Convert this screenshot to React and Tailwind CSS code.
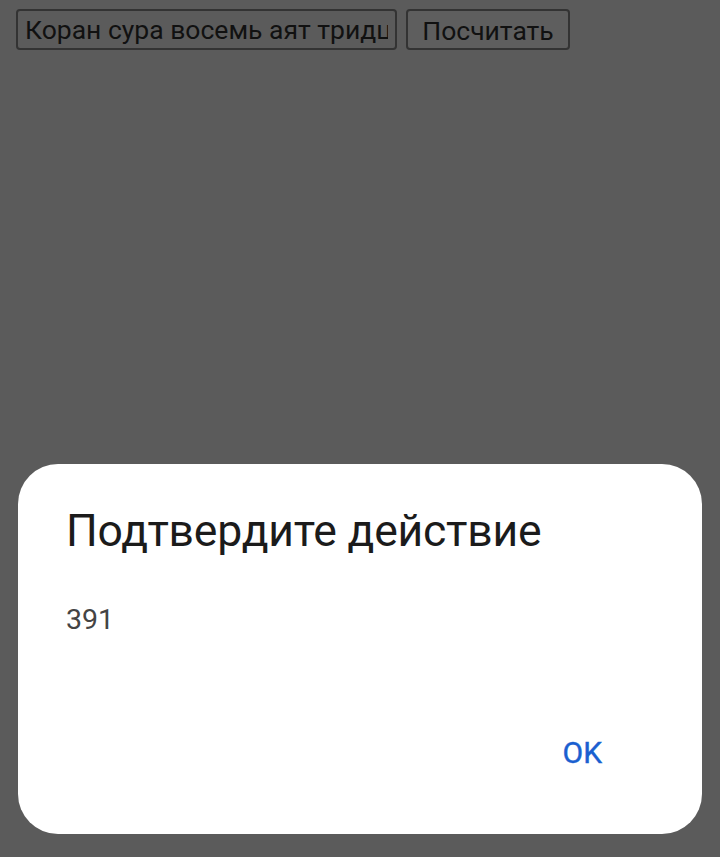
export default function App() {
    return (
        <div className="h-[857px] flex flex-col bg-[#5b5b5b] font-['Roboto',sans-serif]">
            {/* form row */}
            <div className="flex items-center gap-[9px] pt-[9px] pl-[16px]">
                <input
                    readOnly
                    value="Коран сура восемь аят тридцать"
                    className="w-[381px] h-[41px] px-[7px] text-[26.5px] text-[#111] bg-transparent border-2 border-[#333] rounded-[4px] outline-none"
                />
                <button className="w-[164px] h-[41px] text-[26.5px] text-[#111] border-2 border-[#333] rounded-[4px] bg-[#5e5e5e]">
                    Посчитать
                </button>
            </div>

            <div className="flex-1" />

            {/* confirm dialog */}
            <div className="mx-[18px] mb-[23px] h-[370px] bg-white rounded-[40px] flex flex-col pl-[48px] pr-[100px]">
                <h2 className="mt-[41px] text-[44.5px] leading-[52px] text-[#1b1b1b] tracking-[-0.2px] whitespace-nowrap">
                    Подтвердите действие
                </h2>
                <p className="mt-[47px] text-[28.5px] leading-[32px] text-[#444]">391</p>
                <div className="flex-1" />
                <div className="flex justify-end mb-[64px]">
                    <span className="text-[30px] leading-[34px] text-[#1a5fd0] [-webkit-text-stroke:0.4px_#1a5fd0]">OK</span>
                </div>
            </div>
        </div>
    )
}
